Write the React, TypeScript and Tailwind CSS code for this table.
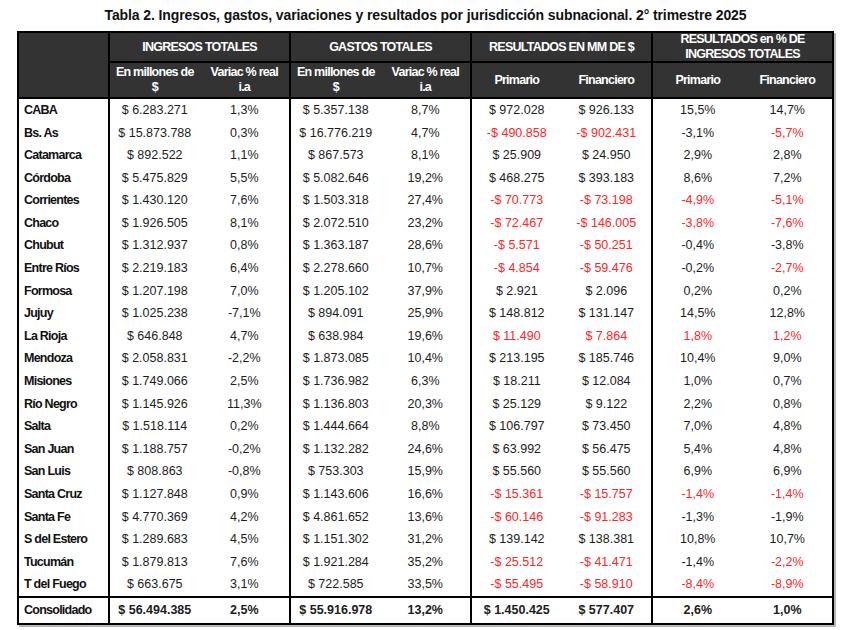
import React from 'react';

type Row = {
  name: string;
  ing: string;
  ingVar: string;
  gas: string;
  gasVar: string;
  prim: string;
  fin: string;
  primPct: string;
  finPct: string;
  red: [boolean, boolean, boolean, boolean];
};

const rows: Row[] = [
  { name: 'CABA', ing: '$ 6.283.271', ingVar: '1,3%', gas: '$ 5.357.138', gasVar: '8,7%', prim: '$ 972.028', fin: '$ 926.133', primPct: '15,5%', finPct: '14,7%', red: [false, false, false, false] },
  { name: 'Bs. As', ing: '$ 15.873.788', ingVar: '0,3%', gas: '$ 16.776.219', gasVar: '4,7%', prim: '-$ 490.858', fin: '-$ 902.431', primPct: '-3,1%', finPct: '-5,7%', red: [true, true, false, true] },
  { name: 'Catamarca', ing: '$ 892.522', ingVar: '1,1%', gas: '$ 867.573', gasVar: '8,1%', prim: '$ 25.909', fin: '$ 24.950', primPct: '2,9%', finPct: '2,8%', red: [false, false, false, false] },
  { name: 'Córdoba', ing: '$ 5.475.829', ingVar: '5,5%', gas: '$ 5.082.646', gasVar: '19,2%', prim: '$ 468.275', fin: '$ 393.183', primPct: '8,6%', finPct: '7,2%', red: [false, false, false, false] },
  { name: 'Corrientes', ing: '$ 1.430.120', ingVar: '7,6%', gas: '$ 1.503.318', gasVar: '27,4%', prim: '-$ 70.773', fin: '-$ 73.198', primPct: '-4,9%', finPct: '-5,1%', red: [true, true, true, true] },
  { name: 'Chaco', ing: '$ 1.926.505', ingVar: '8,1%', gas: '$ 2.072.510', gasVar: '23,2%', prim: '-$ 72.467', fin: '-$ 146.005', primPct: '-3,8%', finPct: '-7,6%', red: [true, true, true, true] },
  { name: 'Chubut', ing: '$ 1.312.937', ingVar: '0,8%', gas: '$ 1.363.187', gasVar: '28,6%', prim: '-$ 5.571', fin: '-$ 50.251', primPct: '-0,4%', finPct: '-3,8%', red: [true, true, false, false] },
  { name: 'Entre Ríos', ing: '$ 2.219.183', ingVar: '6,4%', gas: '$ 2.278.660', gasVar: '10,7%', prim: '-$ 4.854', fin: '-$ 59.476', primPct: '-0,2%', finPct: '-2,7%', red: [true, true, false, true] },
  { name: 'Formosa', ing: '$ 1.207.198', ingVar: '7,0%', gas: '$ 1.205.102', gasVar: '37,9%', prim: '$ 2.921', fin: '$ 2.096', primPct: '0,2%', finPct: '0,2%', red: [false, false, false, false] },
  { name: 'Jujuy', ing: '$ 1.025.238', ingVar: '-7,1%', gas: '$ 894.091', gasVar: '25,9%', prim: '$ 148.812', fin: '$ 131.147', primPct: '14,5%', finPct: '12,8%', red: [false, false, false, false] },
  { name: 'La Rioja', ing: '$ 646.848', ingVar: '4,7%', gas: '$ 638.984', gasVar: '19,6%', prim: '$ 11.490', fin: '$ 7.864', primPct: '1,8%', finPct: '1,2%', red: [true, true, true, true] },
  { name: 'Mendoza', ing: '$ 2.058.831', ingVar: '-2,2%', gas: '$ 1.873.085', gasVar: '10,4%', prim: '$ 213.195', fin: '$ 185.746', primPct: '10,4%', finPct: '9,0%', red: [false, false, false, false] },
  { name: 'Misiones', ing: '$ 1.749.066', ingVar: '2,5%', gas: '$ 1.736.982', gasVar: '6,3%', prim: '$ 18.211', fin: '$ 12.084', primPct: '1,0%', finPct: '0,7%', red: [false, false, false, false] },
  { name: 'Río Negro', ing: '$ 1.145.926', ingVar: '11,3%', gas: '$ 1.136.803', gasVar: '20,3%', prim: '$ 25.129', fin: '$ 9.122', primPct: '2,2%', finPct: '0,8%', red: [false, false, false, false] },
  { name: 'Salta', ing: '$ 1.518.114', ingVar: '0,2%', gas: '$ 1.444.664', gasVar: '8,8%', prim: '$ 106.797', fin: '$ 73.450', primPct: '7,0%', finPct: '4,8%', red: [false, false, false, false] },
  { name: 'San Juan', ing: '$ 1.188.757', ingVar: '-0,2%', gas: '$ 1.132.282', gasVar: '24,6%', prim: '$ 63.992', fin: '$ 56.475', primPct: '5,4%', finPct: '4,8%', red: [false, false, false, false] },
  { name: 'San Luis', ing: '$ 808.863', ingVar: '-0,8%', gas: '$ 753.303', gasVar: '15,9%', prim: '$ 55.560', fin: '$ 55.560', primPct: '6,9%', finPct: '6,9%', red: [false, false, false, false] },
  { name: 'Santa Cruz', ing: '$ 1.127.848', ingVar: '0,9%', gas: '$ 1.143.606', gasVar: '16,6%', prim: '-$ 15.361', fin: '-$ 15.757', primPct: '-1,4%', finPct: '-1,4%', red: [true, true, true, true] },
  { name: 'Santa Fe', ing: '$ 4.770.369', ingVar: '4,2%', gas: '$ 4.861.652', gasVar: '13,6%', prim: '-$ 60.146', fin: '-$ 91.283', primPct: '-1,3%', finPct: '-1,9%', red: [true, true, false, false] },
  { name: 'S del Estero', ing: '$ 1.289.683', ingVar: '4,5%', gas: '$ 1.151.302', gasVar: '31,2%', prim: '$ 139.142', fin: '$ 138.381', primPct: '10,8%', finPct: '10,7%', red: [false, false, false, false] },
  { name: 'Tucumán', ing: '$ 1.879.813', ingVar: '7,6%', gas: '$ 1.921.284', gasVar: '35,2%', prim: '-$ 25.512', fin: '-$ 41.471', primPct: '-1,4%', finPct: '-2,2%', red: [true, true, false, true] },
  { name: 'T del Fuego', ing: '$ 663.675', ingVar: '3,1%', gas: '$ 722.585', gasVar: '33,5%', prim: '-$ 55.495', fin: '-$ 58.910', primPct: '-8,4%', finPct: '-8,9%', red: [true, true, true, true] },
];

// the source uses a condensed face; Liberation Sans with tighter tracking gets the same widths
const condensed = "font-['Liberation_Sans',Arial,sans-serif] font-bold text-[12.5px] tracking-[-0.75px]";

const Cell: React.FC<{ v: string; red?: boolean; bold?: boolean }> = ({ v, red, bold }) => (
  <div className={`flex items-center justify-center ${bold ? 'font-bold' : ''} ${red ? 'text-[#ff2626]' : 'text-[#1c1c1c]'}`}>
    {v}
  </div>
);

const Group: React.FC<{ a: string; b: string; ra?: boolean; rb?: boolean; bold?: boolean }> = ({ a, b, ra, rb, bold }) => (
  <div className="grid grid-cols-2 border-l-2 border-black">
    <Cell v={a} red={ra} bold={bold} />
    <Cell v={b} red={rb} bold={bold} />
  </div>
);

const HeadGroup: React.FC<{ title: React.ReactNode; a: React.ReactNode; b: React.ReactNode }> = ({ title, a, b }) => (
  <div className="flex flex-col border-l-2 border-black">
    <div className="h-[28px] flex items-center justify-center text-center leading-[15px]">{title}</div>
    <div className="h-[2px] bg-black" />
    <div className="h-[34px] grid grid-cols-2">
      <div className="flex items-center justify-center text-center leading-[15px]">{a}</div>
      <div className="flex items-center justify-center text-center leading-[15px]">{b}</div>
    </div>
  </div>
);

export default function App() {
  return (
    <div className="w-[848px] h-[630px] bg-white pl-[17px]">
      <div className="w-[817px] h-[31px] flex items-center justify-center text-[14px] font-bold tracking-[-0.1px] text-[#111] font-['Liberation_Sans',Arial,sans-serif]">
        Tabla 2. Ingresos, gastos, variaciones y resultados por jurisdicción subnacional. 2° trimestre 2025
      </div>
      <div className="w-[817px] border-2 border-black shadow-[2px_2px_0_#b5b5b5]">
        {/* Header */}
        <div className={`grid grid-cols-[89px_181px_181px_181px_181px] bg-[#333333] text-white ${condensed}`}>
          <div />
          <HeadGroup title="INGRESOS TOTALES" a={<>En millones de<br />$</>} b={<>Variac % real<br />i.a</>} />
          <HeadGroup title="GASTOS TOTALES" a={<>En millones de<br />$</>} b={<>Variac % real<br />i.a</>} />
          <HeadGroup title="RESULTADOS EN MM DE $" a="Primario" b="Financiero" />
          <HeadGroup title={<>RESULTADOS en % DE<br />INGRESOS TOTALES</>} a="Primario" b="Financiero" />
        </div>
        <div className="h-[2px] bg-black" />
        {/* Body */}
        <div className="text-[12.5px] font-['Liberation_Sans',Arial,sans-serif]">
          {rows.map((r) => (
            <div key={r.name} className="grid grid-cols-[89px_181px_181px_181px_181px] h-[22.6px]">
              <div className={`flex items-center pl-[5px] text-[#111] ${condensed}`}>{r.name}</div>
              <Group a={r.ing} b={r.ingVar} />
              <Group a={r.gas} b={r.gasVar} />
              <Group a={r.prim} b={r.fin} ra={r.red[0]} rb={r.red[1]} />
              <Group a={r.primPct} b={r.finPct} ra={r.red[2]} rb={r.red[3]} />
            </div>
          ))}
          <div className="h-[2px] bg-black" />
          <div className="grid grid-cols-[89px_181px_181px_181px_181px] h-[25px]">
            <div className={`flex items-center pl-[5px] text-[#111] ${condensed}`}>Consolidado</div>
            <Group a="$ 56.494.385" b="2,5%" bold />
            <Group a="$ 55.916.978" b="13,2%" bold />
            <Group a="$ 1.450.425" b="$ 577.407" bold />
            <Group a="2,6%" b="1,0%" bold />
          </div>
        </div>
      </div>
    </div>
  );
}
